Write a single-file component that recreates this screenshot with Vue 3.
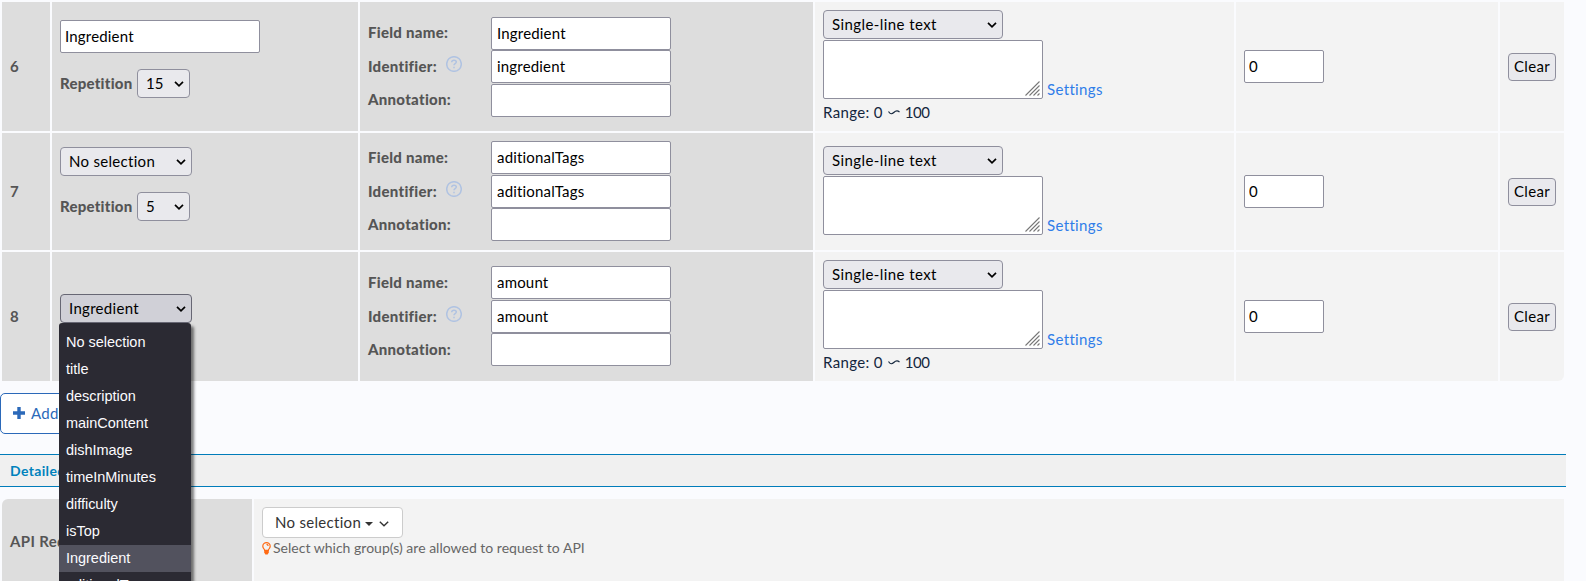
<script setup>
const rows = [
  { no: 6, kind: 'input', group: 'Ingredient', rep: '15', name: 'Ingredient', id: 'ingredient', range: true },
  { no: 7, kind: 'closed', group: 'No selection', rep: '5', name: 'aditionalTags', id: 'aditionalTags', range: false },
  { no: 8, kind: 'open', group: 'Ingredient', rep: '', name: 'amount', id: 'amount', range: true },
]
const options = ['No selection', 'title', 'description', 'mainContent', 'dishImage', 'timeInMinutes', 'difficulty', 'isTop', 'Ingredient', 'aditionalTags']
</script>

<template>
  <div class="page">
    <div class="grid">
      <div v-for="r in rows" :key="r.no" class="row" :class="'row' + r.no">
        <div class="cell dark no">{{ r.no }}</div>
        <div class="cell dark group">
          <input v-if="r.kind === 'input'" class="field wide" :value="r.group" />
          <div v-else class="select main" :class="{ active: r.kind === 'open' }">
            <span>{{ r.group }}</span>
            <svg class="chev" width="10" height="6" viewBox="0 0 10 6"><path d="M1 .8 5 4.8 9 .8" /></svg>
            <div v-if="r.kind === 'open'" class="popup">
              <div v-for="o in options" :key="o" class="option" :class="{ hot: o === r.group }">{{ o }}</div>
            </div>
          </div>
          <div v-if="r.rep" class="rep">
            <b>Repetition</b>
            <div class="select small">
              <span>{{ r.rep }}</span>
              <svg class="chev" width="10" height="6" viewBox="0 0 10 6"><path d="M1 .8 5 4.8 9 .8" /></svg>
            </div>
          </div>
        </div>
        <div class="cell dark names">
          <div class="line"><b>Field name:</b><input class="field" :value="r.name" /></div>
          <div class="line ident">
            <b>Identifier:
              <svg class="help" width="16" height="16" viewBox="0 0 16 16">
                <circle cx="8" cy="8" r="7.3" />
                <path d="M5.7 6.300C5.800 4.900 6.800 4.200 8 4.200c1.300 0 2.300.8 2.300 1.900 0 1.500-2.300 1.500-2.300 3.200" />
                <path d="M8 10.700v1.500" />
              </svg>
            </b>
            <input class="field" :value="r.id" />
          </div>
          <div class="line"><b>Annotation:</b><input class="field" value="" /></div>
        </div>
        <div class="cell type">
          <div class="select kind">
            <span>Single-line text</span>
            <svg class="chev" width="10" height="6" viewBox="0 0 10 6"><path d="M1 .8 5 4.8 9 .8" /></svg>
          </div>
          <div class="area-line">
            <div class="area">
              <svg width="15" height="15" viewBox="0 0 15 15"><path d="M.5 14.500 14.500.5M4.500 14.500l10-10M8.500 14.500l6-6M12.500 14.500l2-2" /></svg>
            </div>
            <a>Settings</a>
          </div>
          <div v-if="r.range" class="range">
            <span>Range: 0</span>
            <svg width="12" height="5" viewBox="0 0 12 5"><path d="M.5 1.500C2.200 4.500 4 4.200 5.800 2.500S9.500.4 11.500 2" /></svg>
            <span class="max">100</span>
          </div>
        </div>
        <div class="cell order"><input class="field num" value="0" /></div>
        <div class="cell act"><button class="clear">Clear</button></div>
      </div>
    </div>

    <div class="add">
      <svg width="12" height="12" viewBox="0 0 12 12"><path d="M4.300 0h3.400v4.300H12v3.400H7.700V12H4.300V7.700H0V4.300h4.300z" /></svg>
      <span>Add</span>
    </div>

    <div class="bar">Detailed</div>

    <div class="api">
      <div class="api-label">API Request</div>
      <div class="api-body">
        <div class="drop">
          <span>No selection</span>
          <svg class="caret" width="8" height="4" viewBox="0 0 8 4"><path d="M0 0h8L4 4z" /></svg>
          <svg class="thin" width="10" height="6" viewBox="0 0 10 6"><path d="M.8.8 5 4.800 9.200.8" /></svg>
        </div>
        <div class="hint">
          <svg width="9" height="13" viewBox="0 0 9 13">
            <path class="bulb" d="M2.700 8.500C2.500 7 .8 6.200.8 4.200a3.700 3.500 0 0 1 7.400 0c0 2-1.700 2.800-1.900 4.300z" />
            <path class="base" d="M2.200 7.800h4.600v2.800L5.600 12.500H3.400L2.200 10.600z" />
            <path class="bulb" d="M4.500 2.400c1 0 1.600.6 1.600 1.500" />
          </svg>
          <span>Select which group(s) are allowed to request to API</span>
        </div>
      </div>
    </div>
  </div>
</template>

<style>
body { background: #fafbfe; overflow: hidden; }
</style>

<style scoped>
.page { width: 1586px; height: 581px; overflow: hidden; background: #fafbfe; font: 15px/20px Lato, "Liberation Sans", sans-serif; color: #000; letter-spacing: .35px; }
.page * { box-sizing: border-box; }
svg { display: block; flex: none; }
.grid { padding: 2px 0 0 2px; display: flex; flex-direction: column; gap: 2px; }
.row { display: grid; grid-template-columns: 48px 306px 453px 419px 262px 64px; gap: 2px; height: 129px; }
.row7 { height: 117px; }
.cell { background: #f3f3f3; display: flex; flex-direction: column; justify-content: center; padding: 0 8px; white-space: nowrap; }
.dark { background: #ddd; color: #555; font-weight: 700; }
.row8 .act { border-bottom-right-radius: 6px; }
.no { letter-spacing: 0; padding-bottom: 1px; }
.row7 .names, .row8 .names { padding-bottom: 1px; }
.group { justify-content: flex-start; padding-top: 18px; }
.row7 .group { padding-top: 14px; }
.row8 .group { padding-top: 42px; }
.field { display: block; width: 180px; height: 33px; margin: 0; border: 1px solid #8f8f9d; border-radius: 2px; background: #fff; padding: 0 5px 1px; font: inherit; font-weight: 400; letter-spacing: .18px; color: #000; outline: none; }
.wide { width: 200px; padding-left: 4px; }
.num { width: 80px; padding-left: 4px; }
.select { position: relative; display: flex; align-items: center; justify-content: space-between; height: 29px; border: 1px solid #8f8f9d; border-radius: 4px; background: #e9e9ed; padding: 0 5px 0 8px; color: #000; font-weight: 400; }
.select > span { padding-bottom: 1px; letter-spacing: .3px; }
.chev { fill: none; stroke: #000; stroke-width: 1.7; }
.main { width: 132px; }
.active { background: #d0d0d7; border-color: #676774; }
.small { width: 53px; }
.small > span { letter-spacing: 0; }
.kind { width: 180px; }
.kind > span { letter-spacing: .42px; }
.rep { display: flex; align-items: center; gap: 5px; margin-top: 16px; }
.rep b { width: 72px; letter-spacing: .23px; padding-bottom: 1px; }
.line { display: flex; align-items: center; height: 33.5px; }
.line b { display: flex; align-items: center; width: 123px; letter-spacing: .28px; padding-bottom: 2px; }
.row7 .ident b, .row8 .ident b { padding-bottom: 1px; }
.help { margin: -3px 0 0 9px; fill: none; stroke: #b0c3e2; stroke-width: 1.5; }
.type { justify-content: flex-start; padding-top: 8px; color: #14263d; }
.row7 .type { padding-top: 13px; }
.area-line { display: flex; align-items: flex-end; gap: 4px; margin-top: 1px; }
.area { width: 220px; height: 59px; border: 1px solid #8f8f9d; border-radius: 2px; background: #fff; display: flex; align-items: flex-end; justify-content: flex-end; padding: 2px; }
.area svg { fill: none; stroke: #777; stroke-width: 1.1; }
.area-line a { color: #2f7de9; }
.range { display: flex; align-items: center; gap: 5px; margin-top: 3px; }
.range svg { fill: none; stroke: #14263d; stroke-width: 1.2; }
.max { letter-spacing: -.5px; }
.clear { width: 48px; height: 28px; padding: 0 0 1px; border: 1px solid #8f8f9d; border-radius: 4px; background: #e9e9ed; font: inherit; letter-spacing: .35px; color: #000; }
.popup { position: absolute; z-index: 2; left: -2px; top: 28px; width: 132px; padding-top: 6px; background: #2b2a33; border-radius: 3px 3px 0 0; box-shadow: 3px 3px 3px rgba(0, 0, 0, .5); color: #fbfbfe; font: 14.5px/27px "Liberation Sans", Arial, sans-serif; letter-spacing: -.03px; }
.option { height: 27px; padding-left: 7px; }
.hot { background: #52525e; }
.add { display: flex; align-items: center; gap: 6px; width: 160px; height: 41px; margin-top: 12px; padding: 0 0 1px 12px; border: 1px solid #2b69b9; border-radius: 5px; background: #fff; color: #2b69b9; }
.add svg { fill: #2b69b9; }
.bar { width: 1566px; height: 33px; margin-top: 20px; padding-left: 10px; border: solid #007cba; border-width: 1px 0; background: #f0f0f0; color: #0082bd; font-weight: 700; font-size: 14px; line-height: 32px; }
.api { display: grid; grid-template-columns: 250px 1310px; gap: 2px; height: 120px; margin: 12px 0 0 2px; }
.api-label { background: #ddd; border-top-left-radius: 6px; padding: 32px 8px; color: #555; font-weight: 700; }
.api-body { background: #f3f3f3; padding: 8px; }
.drop { display: flex; align-items: center; width: 141px; height: 31px; border: 1px solid #ccc; border-radius: 4px; background: #fff; padding-left: 12px; color: #333; }
.drop span { padding-bottom: 2px; letter-spacing: .3px; }
.caret { margin: 2px 0 0 4px; fill: #333; }
.thin { margin: 2px 0 0 6px; fill: none; stroke: #333; stroke-width: 1.4; }
.hint { display: flex; align-items: center; gap: 2px; color: #666; font-size: 14px; letter-spacing: .01px; }
.bulb { fill: none; stroke: #ff6a13; stroke-width: 1.200; }
.base { fill: #ff6a13; }
</style>
